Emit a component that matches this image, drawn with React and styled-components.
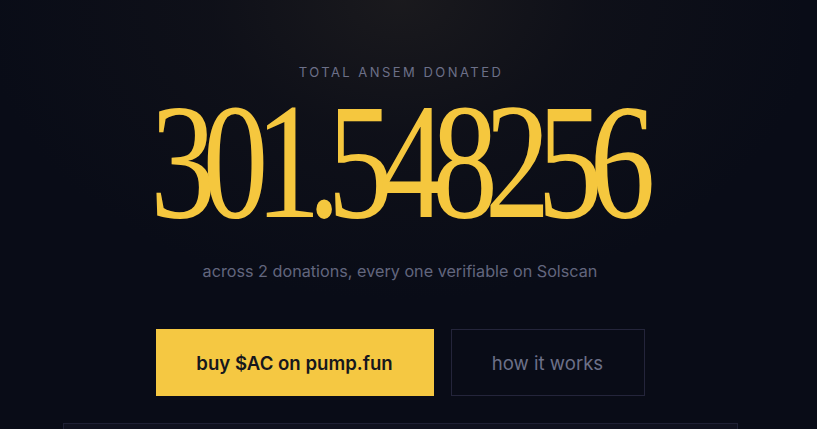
import React from "react";
import styled, { createGlobalStyle } from "styled-components";

const Global = createGlobalStyle`
  html, body { margin: 0; padding: 0; background: #090c17; overflow: hidden; }
  body { font-family: Inter, "Noto Sans", sans-serif; -webkit-font-smoothing: antialiased; }
`;

const Page = styled.div`
  width: 800px;
  height: 429px;
  overflow: hidden;
  background:
    radial-gradient(ellipse 420px 300px at 50% 0%, rgba(28, 27, 30, 0.9) 0%, rgba(20, 20, 26, 0.5) 45%, rgba(9, 12, 23, 0) 100%),
    #090c17;
  display: flex;
  flex-direction: column;
  align-items: center;
  padding-top: 64px;
  box-sizing: border-box;
`;

const Label = styled.div`
  font-size: 13px;
  letter-spacing: 0.19em;
  color: #6c7088;
  line-height: 16px;
  margin-left: 2px;
`;

const Amount = styled.div`
  font-family: "Liberation Serif", "Times New Roman", serif;
  font-size: 166px;
  line-height: 120px;
  height: 107px;
  color: #f5c73e;
  letter-spacing: -0.1em;
  transform: scaleX(0.79);
  transform-origin: center;
  white-space: nowrap;
  margin-top: 21px;
  margin-left: -8px;
`;

const Sub = styled.div`
  margin-top: 53px;
  font-size: 16.2px;
  line-height: 20px;
  color: #62667e;
`;

const Actions = styled.div`
  margin-top: 48px;
  display: flex;
  gap: 17px;
`;

const Button = styled.a`
  box-sizing: border-box;
  height: 67px;
  width: ${(p) => p.$w}px;
  display: flex;
  align-items: center;
  justify-content: center;
  font-size: 18.6px;
  text-decoration: none;
  cursor: pointer;
  background: ${(p) => (p.$primary ? "#f5c842" : "transparent")};
  color: ${(p) => (p.$primary ? "#16171d" : "#6c7088")};
  font-weight: ${(p) => (p.$primary ? 600 : 400)};
  border: 1px solid ${(p) => (p.$primary ? "#f5c842" : "#24253b")};
`;

const Panel = styled.div`
  margin-top: 27px;
  width: 675px;
  height: 40px;
  flex-shrink: 0;
  background: #10121f;
  border: 1px solid #1f2135;
  box-sizing: border-box;
`;

export default function App() {
  return (
    <>
      <Global />
      <Page>
        <Label>TOTAL ANSEM DONATED</Label>
        <Amount>301.548256</Amount>
        <Sub>across 2 donations, every one verifiable on Solscan</Sub>
        <Actions>
          <Button $primary $w={278}>buy $AC on pump.fun</Button>
          <Button $w={194}>how it works</Button>
        </Actions>
        <Panel />
      </Page>
    </>
  );
}
